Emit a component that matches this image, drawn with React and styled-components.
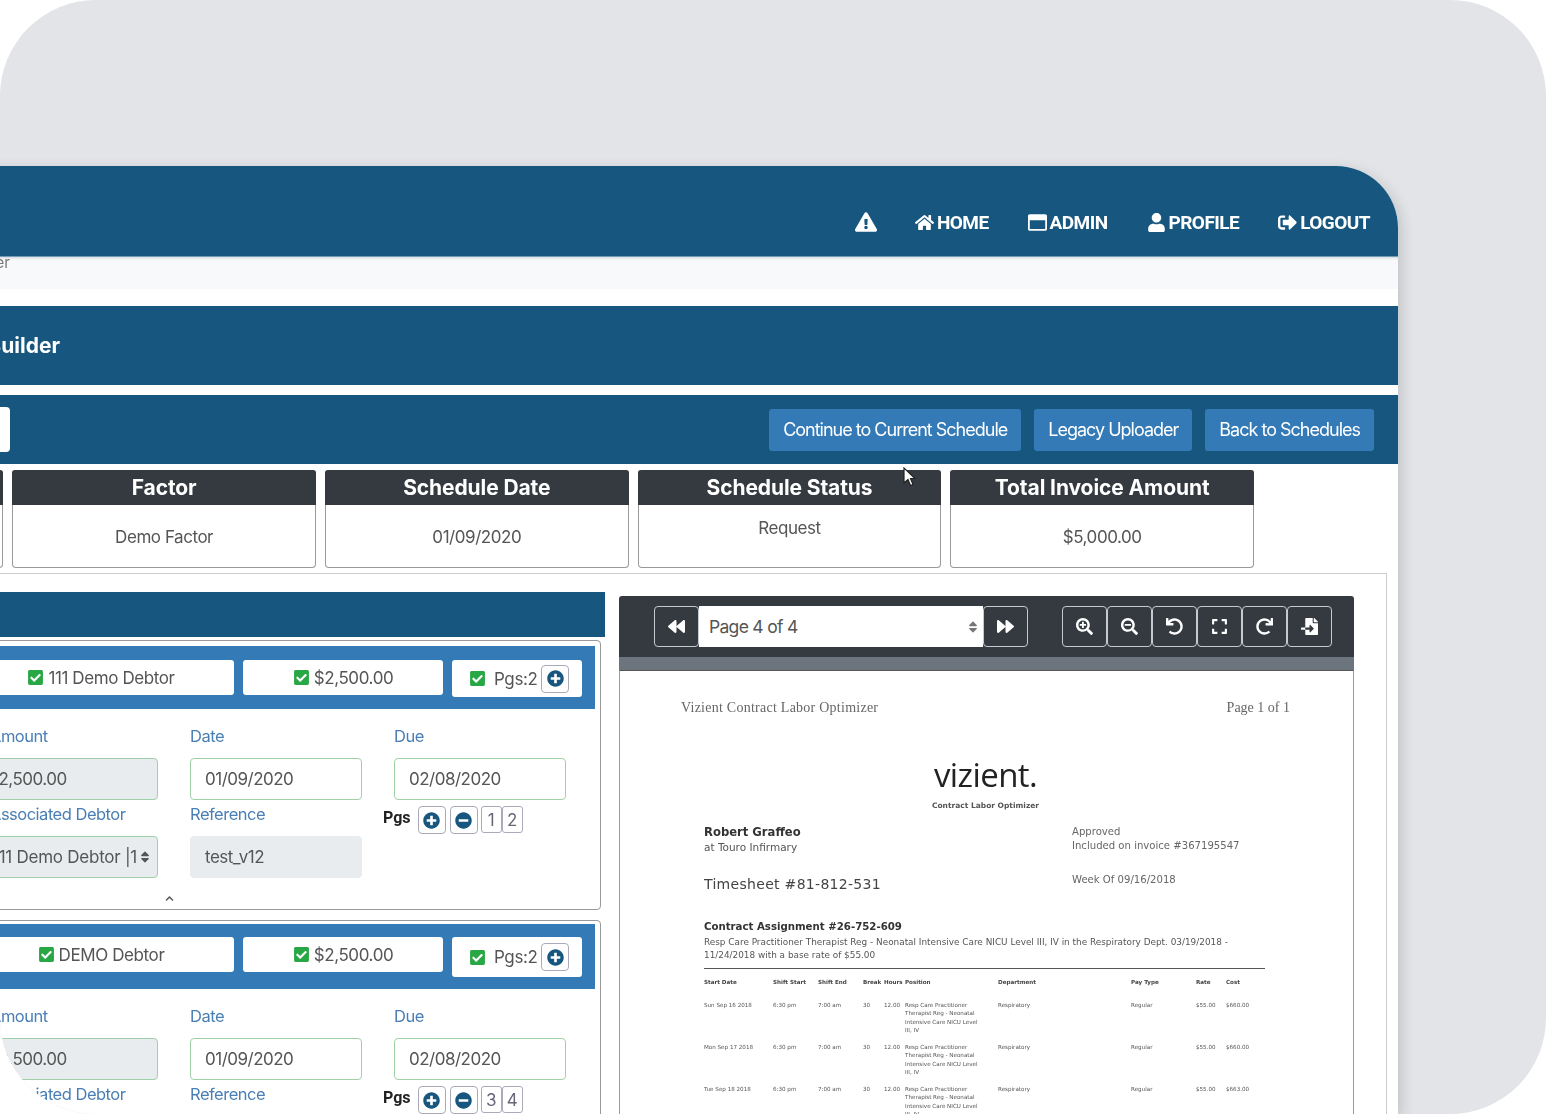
import React from 'react'
import styled, { createGlobalStyle } from 'styled-components'
import {
  FaExclamationTriangle,
  FaHome,
  FaRegWindowMaximize,
  FaUser,
  FaSignOutAlt,
  FaBackward,
  FaForward,
  FaSearchPlus,
  FaSearchMinus,
  FaUndo,
  FaExpand,
  FaRedo,
  FaFileImport,
  FaPlusCircle,
  FaMinusCircle,
  FaCheckSquare,
  FaSort,
  FaChevronUp,
} from 'react-icons/fa'

const NAVY = '#17577f'
const BLUE = '#337ab7'
const DARK = '#343a40'

const GlobalStyle = createGlobalStyle`
  html, body {
    margin: 0;
    background: #fff;
    overflow: hidden;
  }
  * {
    box-sizing: border-box;
  }
  body {
    font-family: Inter, "Liberation Sans", sans-serif;
  }
`

const navItems = [
  { icon: FaHome, label: 'HOME' },
  { icon: FaRegWindowMaximize, label: 'ADMIN' },
  { icon: FaUser, label: 'PROFILE' },
  { icon: FaSignOutAlt, label: 'LOGOUT' },
]

const summary = [
  { title: 'Client', value: 'Demo Client' },
  { title: 'Factor', value: 'Demo Factor' },
  { title: 'Schedule Date', value: '01/09/2020' },
  { title: 'Schedule Status', value: 'Request', raised: true, cursor: true },
  { title: 'Total Invoice Amount', value: '$5,000.00' },
]

const invoices = [
  { debtor: '111 Demo Debtor', amount: '$2,500.00', select: '111 Demo Debtor |1', pages: ['1', '2'], ref: 'test_v12' },
  { debtor: 'DEMO Debtor', amount: '$2,500.00', select: 'DEMO Debtor |2', pages: ['3', '4'], ref: 'test_v13', tall: true },
]

const timesheetRows = [
  ['Sun Sep 16 2018', '$660.00', '$55.00'],
  ['Mon Sep 17 2018', '$660.00', '$55.00'],
  ['Tue Sep 18 2018', '$663.00', '$55.00'],
]

const viewerTools = [FaSearchPlus, FaSearchMinus, FaUndo, FaExpand, FaRedo, FaFileImport]

export default function App() {
  return (
    <Stage>
      <GlobalStyle />
      <Window>
        <NavBar>
          <NavAlert>
            <FaExclamationTriangle />
          </NavAlert>
          {navItems.map(({ icon: Icon, label }) => (
            <NavItem key={label}>
              <Icon />
              {label}
            </NavItem>
          ))}
        </NavBar>
        <Breadcrumb>
          <BreadcrumbText>Home / Schedule Builder</BreadcrumbText>
        </Breadcrumb>
        <TitleBar>
          <TitleText>Schedule Builder</TitleText>
        </TitleBar>
        <ActionBar>
          <SearchBox />
          <ActionButtons>
            <ActionButton>Continue to Current Schedule</ActionButton>
            <ActionButton>Legacy Uploader</ActionButton>
            <ActionButton>Back to Schedules</ActionButton>
          </ActionButtons>
        </ActionBar>
        <SummaryRow>
          {summary.map((item) => (
            <SummaryCard key={item.title}>
              <SummaryTitle>{item.title}</SummaryTitle>
              <SummaryValue $raised={item.raised}>{item.value}</SummaryValue>
              {item.cursor && (
                <Cursor viewBox="0 0 14 20">
                  <path d="M2 1v15l4-3.5 2.5 6 2.5-1-2.5-6H13z" fill="#fff" stroke="#222" strokeWidth="1.2" />
                </Cursor>
              )}
            </SummaryCard>
          ))}
        </SummaryRow>
        <Workspace>
          <LeftColumn>
            <PanelHeader />
            {invoices.map((invoice) => (
              <InvoiceCard key={invoice.debtor} $tall={invoice.tall}>
                <InvoiceBar $tall={invoice.tall}>
                  <BarBox $width={266}>
                    <Check />
                    {invoice.debtor}
                  </BarBox>
                  <BarBox $width={200}>
                    <Check />
                    {invoice.amount}
                  </BarBox>
                  <PagesBox $tall={invoice.tall}>
                    <Check />
                    <PagesText>Pgs:2</PagesText>
                    <RoundButton>
                      <FaPlusCircle />
                    </RoundButton>
                  </PagesBox>
                </InvoiceBar>
                <FormGrid>
                  <Field>
                    <FieldLabel>Amount</FieldLabel>
                    <TextInput $tight $shifted $readOnly $valid>{invoice.amount}</TextInput>
                  </Field>
                  <Field>
                    <FieldLabel>Date</FieldLabel>
                    <TextInput $valid>01/09/2020</TextInput>
                  </Field>
                  <Field>
                    <FieldLabel>Due</FieldLabel>
                    <TextInput $valid>02/08/2020</TextInput>
                  </Field>
                  <Field>
                    <FieldLabel>Associated Debtor</FieldLabel>
                    <TextInput $tight $readOnly $valid>
                      <SelectText>{invoice.select}</SelectText>
                      <SelectCaret />
                    </TextInput>
                  </Field>
                  <Field>
                    <FieldLabel>Reference</FieldLabel>
                    <TextInput $readOnly>{invoice.ref}</TextInput>
                  </Field>
                  <PagesField>
                    <PagesLabel>Pgs</PagesLabel>
                    <RoundButton>
                      <FaPlusCircle />
                    </RoundButton>
                    <RoundButton>
                      <FaMinusCircle />
                    </RoundButton>
                    <PageNumbers>
                      {invoice.pages.map((page) => (
                        <PageNumber key={page}>{page}</PageNumber>
                      ))}
                    </PageNumbers>
                  </PagesField>
                </FormGrid>
                <Collapse>
                  <FaChevronUp />
                </Collapse>
              </InvoiceCard>
            ))}
          </LeftColumn>
          <Viewer>
            <ViewerBar>
              <PagerGroup>
                <ToolButton>
                  <FaBackward />
                </ToolButton>
                <PageSelect>
                  Page 4 of 4
                  <FaSort />
                </PageSelect>
                <ToolButton>
                  <FaForward />
                </ToolButton>
              </PagerGroup>
              <ToolGroup>
                {viewerTools.map((Icon, i) => (
                  <ToolButton key={i}>
                    <Icon />
                  </ToolButton>
                ))}
              </ToolGroup>
            </ViewerBar>
            <ViewerBand />
            <Doc>
              <DocTop>
                <DocTopTitle>Vizient Contract Labor Optimizer</DocTopTitle>
                <span>Page 1 of 1</span>
              </DocTop>
              <Logo>vizient.</Logo>
              <LogoSub>Contract Labor Optimizer</LogoSub>
              <DocBody>
                <DocColumns>
                  <div>
                    <DocName>Robert Graffeo</DocName>
                    <DocPlace>at Touro Infirmary</DocPlace>
                    <DocSheet>Timesheet #81-812-531</DocSheet>
                  </div>
                  <DocStatus>
                    <div>Approved</div>
                    <div>Included on invoice #367195547</div>
                    <DocWeek>Week Of 09/16/2018</DocWeek>
                  </DocStatus>
                </DocColumns>
                <DocAssignment>Contract Assignment #26-752-609</DocAssignment>
                <DocDescription>
                  Resp Care Practitioner Therapist Reg - Neonatal Intensive Care NICU Level III, IV in the Respiratory
                  Dept. 03/19/2018 - 11/24/2018 with a base rate of $55.00
                </DocDescription>
                <DocRule />
                <SheetHead>
                  <span>Start Date</span>
                  <span>Shift Start</span>
                  <span>Shift End</span>
                  <span>Break</span>
                  <span>Hours</span>
                  <span>Position</span>
                  <span>Department</span>
                  <span>Pay Type</span>
                  <span>Rate</span>
                  <span>Cost</span>
                </SheetHead>
                {timesheetRows.map(([day, cost, rate]) => (
                  <SheetRow key={day}>
                    <span>{day}</span>
                    <span>6:30 pm</span>
                    <span>7:00 am</span>
                    <span>30</span>
                    <span>12.00</span>
                    <span>Resp Care Practitioner Therapist Reg - Neonatal Intensive Care NICU Level III, IV</span>
                    <span>Respiratory</span>
                    <span>Regular</span>
                    <span>{rate}</span>
                    <span>{cost}</span>
                  </SheetRow>
                ))}
              </DocBody>
            </Doc>
          </Viewer>
        </Workspace>
      </Window>
    </Stage>
  )
}

const Stage = styled.div`
  width: 1546px;
  height: 1114px;
  padding-top: 166px;
  overflow: hidden;
  border-radius: 96px;
  background: #e2e4e8;
`

// the app window runs off the left edge of the picture
const Window = styled.div`
  width: 1998px;
  height: 948px;
  margin-left: -600px;
  overflow: hidden;
  border-radius: 0 62px 0 0;
  background: #fff;
  box-shadow: 4px 4px 14px rgba(0, 0, 0, 0.14);
  filter: blur(0.45px);
`

const NavBar = styled.div`
  display: flex;
  justify-content: flex-end;
  align-items: center;
  gap: 39px;

  height: 91px;
  padding: 22px 28px 0 0;

  background: ${NAVY};
  border-bottom: 1px solid #6f9db8;
  color: #fff;
`

const NavAlert = styled.div`
  display: flex;
  margin-right: -1px;
  font-size: 22px;
`

const NavItem = styled.div`
  display: flex;
  align-items: center;
  gap: 3px;

  font-family: Roboto, sans-serif;
  font-size: 19px;
  font-weight: 700;
  letter-spacing: -0.55px;

  & svg {
    font-size: 19px;
  }
`

const Breadcrumb = styled.div`
  height: 32px;
  background: #f8f9fa;
  box-shadow: inset 0 3px 3px -2px rgba(0, 0, 0, 0.15);
`

const BreadcrumbText = styled.div`
  width: 610px;
  font-size: 15px;
  line-height: 12px;
  text-align: right;
  color: #777;
`

const TitleBar = styled.div`
  display: flex;
  align-items: center;

  height: 79px;
  margin-top: 17px;

  background: ${NAVY};
`

const TitleText = styled.div`
  width: 660px;

  font-size: 21px;
  font-weight: 700;
  text-align: right;
  color: #fff;
`

const ActionBar = styled.div`
  display: flex;
  align-items: center;

  height: 69px;
  margin-top: 10px;
  padding-right: 24px;

  background: ${NAVY};
`

const SearchBox = styled.div`
  width: 610px;
  height: 45px;
  border-radius: 0 4px 4px 0;
  background: #fff;
`

const ActionButtons = styled.div`
  display: flex;
  gap: 13px;
  margin-left: auto;
`

const ActionButton = styled.div`
  padding: 0 14px;

  font-family: Inter, sans-serif;
  font-size: 18px;
  letter-spacing: -1px;
  line-height: 42px;
  color: #fff;

  border-radius: 3px;
  background: ${BLUE};
`

const SummaryRow = styled.div`
  display: flex;
  justify-content: flex-end;
  gap: 9px;

  margin-top: 6px;
  padding-right: 144px;
`

const SummaryCard = styled.div`
  position: relative;

  display: flex;
  flex-direction: column;

  width: 303.7px;
  height: 98px;

  overflow: visible;
  border: 1px solid #999;
  border-top: 0;
  border-radius: 4px;
`

const SummaryTitle = styled.div`
  margin: 0 -1px;

  font-size: 21px;
  font-weight: 700;
  letter-spacing: -0.1px;
  line-height: 35px;
  text-align: center;
  color: #fff;

  border-radius: 3px 3px 0 0;
  background: ${DARK};
`

const SummaryValue = styled.div`
  padding-top: ${({ $raised }) => ($raised ? '12px' : '21px')};

  font-size: 17px;
  line-height: 22px;
  letter-spacing: -0.45px;
  text-align: center;
  color: #555;
`

const Cursor = styled.svg`
  position: absolute;
  top: -3px;
  left: 263px;

  width: 14px;
  height: 20px;
`

const Workspace = styled.div`
  display: flex;
  justify-content: flex-end;
  align-items: flex-start;
  gap: 14px;

  margin: 5px 11px 0 0;
  padding-right: 32px;

  border-top: 1px solid #ccc;
  border-right: 1px solid #ccc;
`

const LeftColumn = styled.div`
  width: 1205px;
  margin-top: 18px;
`

const PanelHeader = styled.div`
  height: 45px;
  background: ${NAVY};
`

const InvoiceCard = styled.div`
  width: 1201px;
  height: ${({ $tall }) => ($tall ? '300px' : '270px')};
  margin-top: ${({ $tall }) => ($tall ? '10px' : '3px')};
  padding: ${({ $tall }) => ($tall ? '3px' : '5px')} 5px 0;

  border: 1px solid #999;
  border-radius: 4px;
`

const InvoiceBar = styled.div`
  display: flex;
  justify-content: flex-end;
  align-items: flex-start;
  gap: 9px;

  height: ${({ $tall }) => ($tall ? '65px' : '63px')};
  padding: ${({ $tall }) => ($tall ? '13px' : '14px')} 13px 0 0;

  background: ${BLUE};
`

const BarBox = styled.div`
  display: flex;
  justify-content: center;
  align-items: center;
  gap: 4px;

  width: ${({ $width }) => $width}px;
  height: 35px;

  font-size: 17px;
  letter-spacing: -0.4px;
  color: #555;

  border-radius: 3px;
  background: #fff;
`

const Check = styled(FaCheckSquare)`
  flex: none;
  font-size: 17px;
  color: #28a745;
`

const PagesBox = styled(BarBox)`
  justify-content: flex-start;
  width: 130px;
  height: ${({ $tall }) => ($tall ? '40px' : '37px')};
  padding-left: 17px;
`

const PagesText = styled.span`
  margin-left: 4px;
  margin-right: 0;
`

const RoundButton = styled.span`
  display: inline-flex;
  justify-content: center;
  align-items: center;

  width: 28px;
  height: 28px;

  font-size: 17px;
  color: #17577f;

  border: 1px solid #aab;
  border-radius: 4px;
  background: #fff;
`

const FormGrid = styled.div`
  display: grid;
  grid-template-columns: 168px 172px 172px;
  justify-content: end;
  column-gap: 32px;

  padding: 15px 29px 0 0;
`

const Field = styled.div`
  margin-bottom: 2px;
`

const FieldLabel = styled.div`
  margin-bottom: 10px;

  font-size: 16.5px;
  letter-spacing: -0.5px;
  line-height: 24px;
  color: #4a7fb5;
`

const TextInput = styled.div`
  display: flex;
  align-items: center;

  height: 42px;
  padding: 0 5px 0 ${({ $tight }) => ($tight ? '1px' : '14px')};

  font-size: 17px;
  letter-spacing: -0.5px;
  text-indent: ${({ $shifted }) => ($shifted ? '-4px' : '0')};
  color: #555;

  border: 1px solid ${({ $valid }) => ($valid ? '#9fd0a8' : '#e9ecef')};
  border-radius: 4px;
  background: ${({ $readOnly }) => ($readOnly ? '#e9ecef' : '#fff')};
`

const SelectText = styled.span`
  flex: 1;
  overflow: hidden;
  letter-spacing: -0.25px;
  white-space: nowrap;
`

const SelectCaret = styled(FaSort)`
  flex: none;
  font-size: 14px;
`

const PagesField = styled.div`
  display: flex;
  align-items: flex-start;
  gap: 4px;

  margin: 4px 0 0 -11px;
`

const PagesLabel = styled.span`
  margin-right: 3px;

  font-family: Roboto, sans-serif;
  font-size: 16px;
  font-weight: 700;
  line-height: 24px;
  color: #222;
`

const PageNumbers = styled.span`
  display: inline-flex;
  margin-left: -1px;
`

const PageNumber = styled.span`
  width: 21px;
  height: 27px;

  font-size: 17px;
  letter-spacing: -0.3px;
  line-height: 27px;
  text-align: center;
  color: #667;

  border: 1px solid #aab;
  border-radius: 3px;
`

const Collapse = styled.div`
  display: flex;
  justify-content: flex-end;

  padding: 14px 421px 0 0;

  font-size: 9px;
  color: #555;
`

const Viewer = styled.div`
  width: 735px;
  margin-top: 22px;
`

const ViewerBar = styled.div`
  display: flex;
  align-items: center;
  gap: 34px;

  height: 61px;
  padding: 0 0 0 35px;

  border-radius: 3px 3px 0 0;
  background: ${DARK};
`

const PagerGroup = styled.div`
  display: flex;
`

const ToolGroup = styled.div`
  display: flex;
`

const ToolButton = styled.div`
  display: flex;
  justify-content: center;
  align-items: center;

  width: 45px;
  height: 41px;

  font-size: 17px;
  color: #fff;

  border: 1px solid #c4cad0;
  border-radius: 4px;
  background: ${DARK};
`

const PageSelect = styled.div`
  display: flex;
  justify-content: space-between;
  align-items: center;

  width: 284px;
  padding: 0 3px 0 10px;

  font-size: 17.5px;
  letter-spacing: -0.7px;
  color: #555;

  background: #fff;

  & svg {
    font-size: 14px;
    color: #777;
  }
`

const ViewerBand = styled.div`
  height: 13px;
  background: #6c757d;
`

const Doc = styled.div`
  height: 460px;
  padding: 28px 63px 0 61px;

  overflow: hidden;
  border: 1px solid #999;
  border-top: 1px solid #555;
  background: #fff;
  color: #333;
`

const DocTop = styled.div`
  display: flex;
  justify-content: space-between;

  font-family: "Liberation Serif", serif;
  font-size: 14px;
  line-height: 17px;
  color: #666;
`

const DocTopTitle = styled.span`
  letter-spacing: 0.25px;
`

const Logo = styled.div`
  margin-top: 40px;

  font-family: "Open Sans", sans-serif;
  font-size: 33px;
  letter-spacing: -0.6px;
  line-height: 38px;
  text-align: center;
  color: #222;
`

const LogoSub = styled.div`
  margin-top: 6px;

  font-family: "DejaVu Sans", sans-serif;
  font-size: 7.5px;
  font-weight: 700;
  line-height: 12px;
  text-align: center;
  color: #555;
`

const DocBody = styled.div`
  padding: 13px 0 0 23px;
  font-family: "DejaVu Sans", sans-serif;
`

const DocColumns = styled.div`
  display: flex;
  justify-content: space-between;
  padding-right: 51px;
`

const DocName = styled.div`
  font-size: 11.6px;
  font-weight: 700;
  line-height: 15px;
`

const DocPlace = styled.div`
  font-size: 10.5px;
  line-height: 15px;
  color: #555;
`

const DocSheet = styled.div`
  margin-top: 19px;

  font-size: 14px;
  letter-spacing: 0.3px;
  line-height: 20px;
  color: #444;
`

const DocStatus = styled.div`
  width: 167px;

  font-size: 10.1px;
  line-height: 14px;
  white-space: nowrap;
  color: #666;
`

const DocWeek = styled.div`
  margin-top: 20px;
`

const DocAssignment = styled.div`
  margin-top: 26px;

  font-size: 10.2px;
  font-weight: 700;
  line-height: 14px;
`

const DocDescription = styled.div`
  width: 540px;
  margin-top: 2px;

  font-size: 8.9px;
  line-height: 12.5px;
  color: #555;
`

const DocRule = styled.div`
  height: 1px;
  margin: 7px 0 0;
  width: 561px;
  background: #555;
`

const SheetHead = styled.div`
  display: grid;
  grid-template-columns: 69px 45px 45px 21px 21px 93px 133px 65px 30px 30px;

  margin-top: 9px;
  padding-bottom: 14px;

  font-size: 5.6px;
  font-weight: 700;
  line-height: 8.6px;
  white-space: nowrap;
  color: #444;
`

const SheetRow = styled(SheetHead)`
  height: 42px;
  margin-top: 0;
  padding-bottom: 0;

  font-weight: 400;
  white-space: normal;
  color: #555;

  & > span:nth-child(6) {
    padding-right: 14px;
  }
`
